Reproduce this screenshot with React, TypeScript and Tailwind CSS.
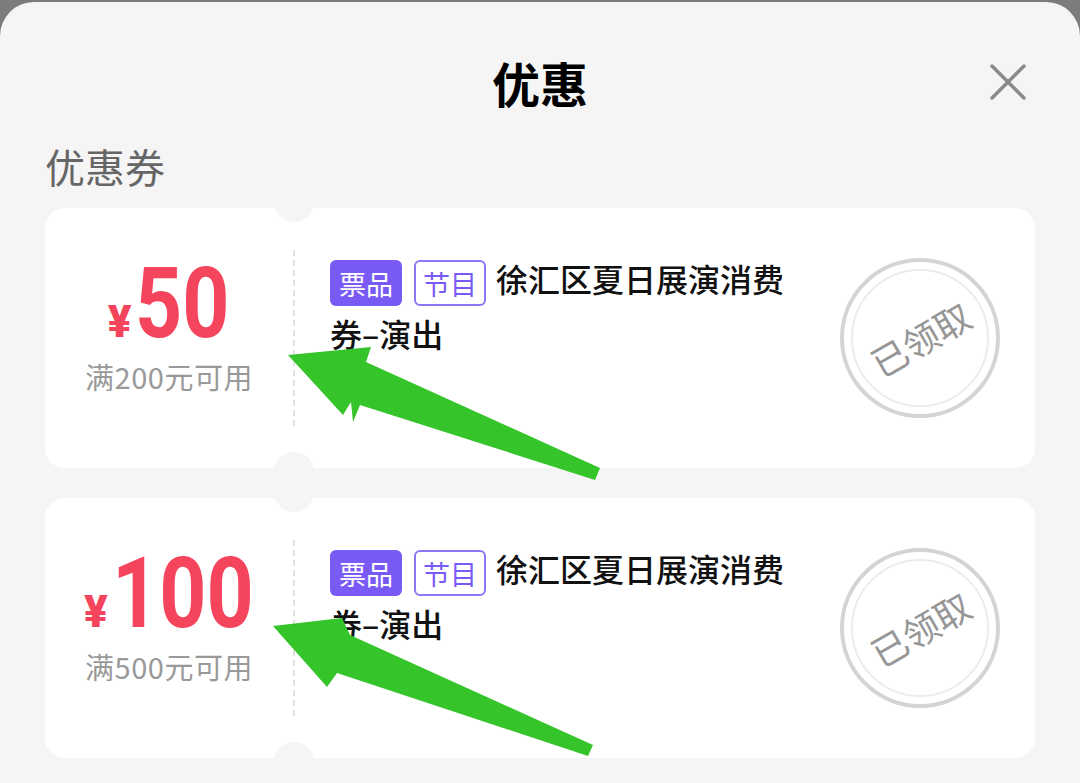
import React from "react";

const CJK = "'Noto Sans CJK SC', 'Noto Sans', sans-serif";
const NUM = "'Roboto', 'Noto Sans CJK SC', sans-serif";

function Coupon({ amount, limit }: { amount: string; limit: string }) {
  return (
    <div className="relative flex h-[260px] rounded-[20px] bg-white">
      <div className="absolute left-[229px] top-[-26px] h-[40px] w-[40px] rounded-full bg-[#f5f5f5]" />
      <div className="absolute left-[229px] bottom-[-24px] h-[40px] w-[40px] rounded-full bg-[#f5f5f5]" />
      <div className="flex w-[248px] flex-col items-center pt-[48px]">
        <div className="flex items-baseline text-[#f5455c]" style={{ fontFamily: NUM }}>
          <span className="mr-[4px] text-[44px] font-black leading-none">¥</span>
          <span
            className="inline-block origin-left scale-x-[0.84] text-[98px] font-bold leading-[96px]"
            style={{ marginRight: -8.8 * amount.length }}
          >
            {amount}
          </span>
        </div>
        <div className="mt-[6px] text-[29px] leading-[36px] tracking-[0.5px] text-[#999]" style={{ fontFamily: CJK }}>
          {limit}
        </div>
      </div>
      <div className="my-[42px] border-l-2 border-dashed border-[#e0e0e0]" />
      <div className="flex-1 pl-[35px] pt-[43px]">
        <div className="w-[480px] text-[32px] font-medium leading-[54px] text-[#111]" style={{ fontFamily: CJK }}>
          <span className="mr-[12px] inline-flex h-[46px] w-[72px] items-center justify-center rounded-[6px] bg-[#7a5af5] align-middle text-[27px] font-normal leading-none text-white">
            票品
          </span>
          <span className="mr-[10px] inline-flex h-[46px] w-[72px] items-center justify-center rounded-[6px] border-2 border-[#8f75f5] align-middle text-[27px] font-normal leading-none text-[#7a5af5]">
            节目
          </span>
          徐汇区夏日展演消费券–演出
        </div>
      </div>
      <div className="flex items-center pr-[35px]">
        <div className="flex h-[160px] w-[160px] items-center justify-center rounded-full border-[4px] border-[#d4d4d4]">
          <div className="flex h-[138px] w-[138px] items-center justify-center rounded-full border-2 border-[#ececec]">
            <span className="-rotate-[30deg] text-[36px] leading-none text-[#969696]" style={{ fontFamily: CJK }}>
              已领取
            </span>
          </div>
        </div>
      </div>
    </div>
  );
}

export default function App() {
  return (
    <div className="relative h-[783px] w-[1080px] overflow-hidden bg-[#7c7c7c] pt-[2px]">
      <div className="h-[781px] rounded-t-[34px] bg-[#f5f5f5]">
        <div className="flex pt-[49px]">
          <div className="w-[90px]" />
          <div className="flex-1 text-center text-[48px] font-bold leading-[62px] text-black" style={{ fontFamily: CJK }}>
            优惠
          </div>
          <div className="flex w-[90px] pt-[13px]">
            <svg width="36" height="36" viewBox="0 0 36 36">
              <path d="M2 2 L34 34 M34 2 L2 34" stroke="#8a8a8a" strokeWidth="3.5" strokeLinecap="round" fill="none" />
            </svg>
          </div>
        </div>
        <div className="mt-[28px] pl-[45px] text-[40px] leading-[50px] text-[#666]" style={{ fontFamily: CJK }}>
          优惠券
        </div>
        <div className="mx-[45px] mt-[17px] flex flex-col gap-[30px]">
          <Coupon amount="50" limit="满200元可用" />
          <Coupon amount="100" limit="满500元可用" />
        </div>
      </div>
      <svg className="pointer-events-none absolute left-0 top-0" width="1080" height="783" viewBox="0 0 1080 783">
        <polygon
          points="288,355 371,347 366,362 600,468 595,480 360,405 353,422 351,402 343,415"
          fill="#35c52b"
        />
        <polygon
          points="273,626 342,618 350,635 593,745 588,756 337,673 327,687"
          fill="#35c52b"
        />
      </svg>
    </div>
  );
}
